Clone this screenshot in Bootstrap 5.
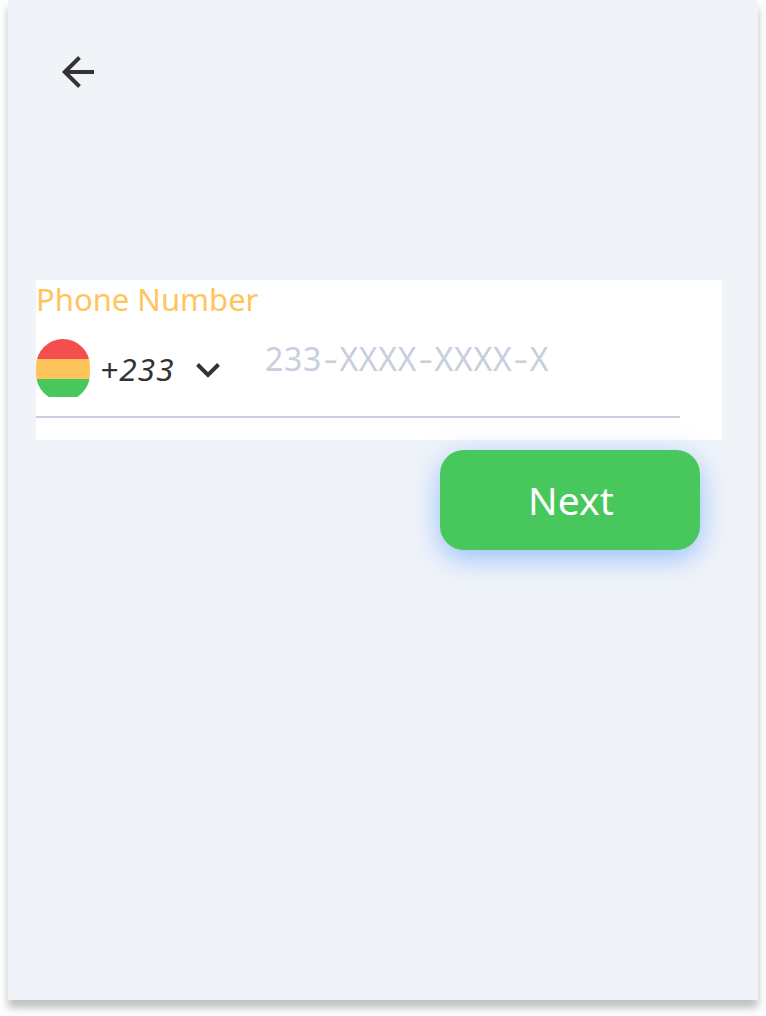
<!DOCTYPE html>
<html lang="en">
<head>
<meta charset="utf-8">
<meta name="viewport" content="width=device-width, initial-scale=1">
<title>Phone Number</title>
<link href="https://cdn.jsdelivr.net/npm/bootstrap@5.3.0/dist/css/bootstrap.min.css" rel="stylesheet">
<style>
body{background:#fff;font-family:"Noto Sans","Open Sans",sans-serif;height:1016px}
.screen{width:750px;height:1000px;margin-left:8px;background:#f0f4f9;box-shadow:0 8px 8px rgba(0,0,0,.25);padding:48px 36px 0 28px}
.back{width:48px;height:48px;margin-left:18px}
.phone{width:686px;height:160px;margin-top:184px}
.field-label{color:#ffc55c;font-size:31px;line-height:38px}
.entry{width:644px;height:100px;border-bottom:2px solid #c8cedd}
.flag{width:54px;height:58px;margin-top:21px}
.code{color:#333;font-size:31.5px;line-height:40px;font-style:italic;letter-spacing:1.2px;margin:31px 0 0 10px;width:96px}
.chev{margin-top:45px}
.number{color:#c8cedd;font-size:32px;line-height:40px;letter-spacing:.7px;margin-top:21px;margin-left:45px;outline:0}
.dash{display:inline-block;width:17.4px;text-align:center;letter-spacing:0;transform:scaleX(1.4)}
.next{width:260px;height:100px;margin:10px 22px 0 0;padding:0 0 0 2px;background:#48c75c!important;border-radius:24px;font-size:39px;letter-spacing:.1px;box-shadow:0 8px 28px rgba(61,139,255,.5)}
</style>
</head>
<body>
<main class="screen">
  <button class="back btn border-0 p-0 d-block" aria-label="Back">
    <svg class="d-block" width="48" height="48" viewBox="0 0 48 48" fill="none" stroke="#333" stroke-width="4"><path d="M40 24H11M25.500 9.500 10.800 24l14.700 14.500"/></svg>
  </button>
  <form class="phone bg-white">
    <div class="field-label" id="phone-label">Phone Number</div>
    <div class="entry d-flex align-items-start">
      <svg class="flag flex-shrink-0" viewBox="0 0 54 58">
        <defs><clipPath id="round"><rect width="54" height="62" rx="27"/></clipPath></defs>
        <g clip-path="url(#round)"><path fill="#f44f4f" d="M0 0h54v20H0z"/><path fill="#ffc55c" d="M0 20h54v20H0z"/><path fill="#48c75c" d="M0 40h54v18H0z"/></g>
      </svg>
      <span class="code flex-shrink-0">+233</span>
      <svg class="chev flex-shrink-0" width="24" height="15" viewBox="0 0 24 15" fill="none" stroke="#333" stroke-width="4"><path d="M1.500 1.500 12 12 22.500 1.500"/></svg>
      <div class="number text-nowrap" role="textbox" tabindex="0" aria-labelledby="phone-label">233<span class="dash">-</span>XXXX<span class="dash">-</span>XXXX<span class="dash">-</span>X</div>
    </div>
  </form>
  <div class="d-flex justify-content-end">
    <button class="next btn text-white border-0" type="button">Next</button>
  </div>
</main>
<script src="https://cdn.jsdelivr.net/npm/bootstrap@5.3.0/dist/js/bootstrap.bundle.min.js"></script>
</body>
</html>
